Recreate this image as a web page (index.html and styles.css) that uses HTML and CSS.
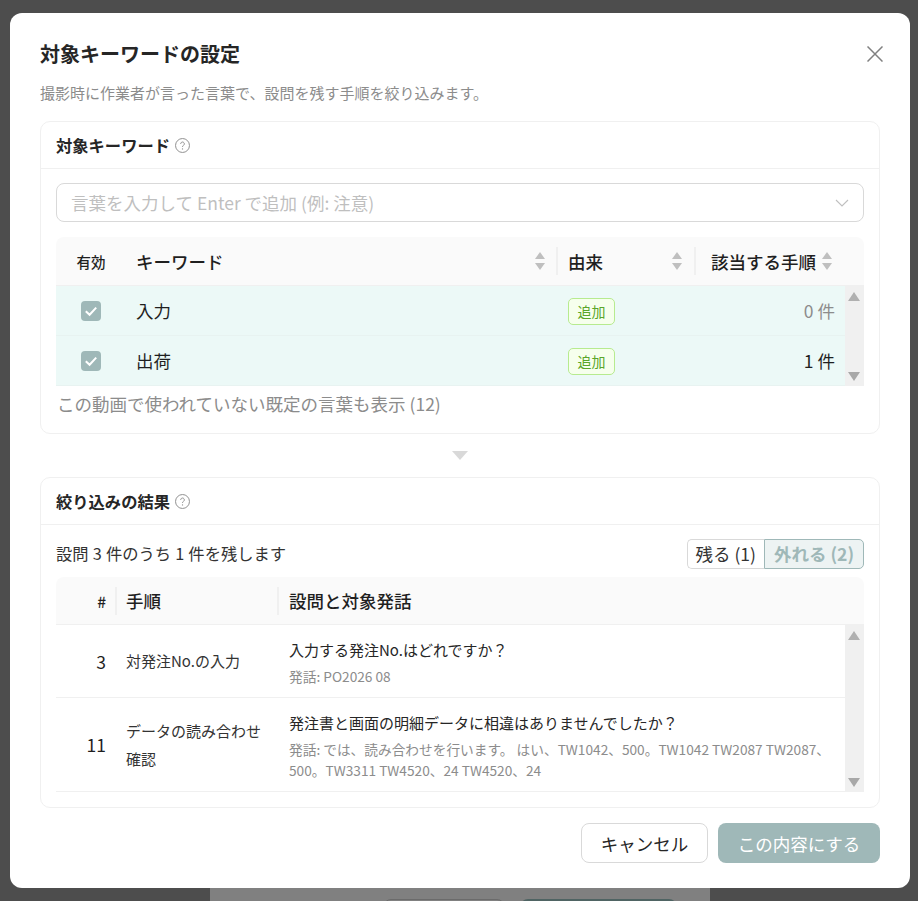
FILE: index.html
```html
<!DOCTYPE html>
<html lang="ja">
<head>
  <meta charset="utf-8">
  <title>対象キーワードの設定</title>
  <link rel="stylesheet" href="styles.css">
</head>
<body>

<div class="backdrop_page">
  <span class="page_btn page_btn_light"></span>
  <span class="page_btn page_btn_dark"></span>
</div>

<div class="modal">
  <div class="modal_head">
    <h1>対象キーワードの設定</h1>
    <svg class="close_icon" viewBox="0 0 16 16"><path d="M0.5 0.5L15.5 15.5M15.5 0.5L0.5 15.5"/></svg>
  </div>
  <p class="modal_desc">撮影時に作業者が言った言葉で、設問を残す手順を絞り込みます。</p>

  <section class="card card_keywords">
    <div class="card_head">
      対象キーワード
      <svg class="help_icon" viewBox="0 0 14 14"><circle cx="7" cy="7" r="6.5"/><path d="M5.3 5.5a1.7 1.7 0 1 1 2.6 1.4c-.6.4-.9.7-.9 1.4"/><circle class="help_dot" cx="7" cy="10.2" r=".6"/></svg>
    </div>
    <div class="card_body">
      <div class="select_box">
        <span>言葉を入力して Enter で追加 (例: 注意)</span>
        <svg class="chevron" viewBox="0 0 14 8"><path d="M1 1L7 7L13 1"/></svg>
      </div>

      <div class="table">
        <div class="kw_row kw_head">
          <div class="th_small">有効</div>
          <div class="th sortable">キーワード <i class="sort"></i></div>
          <div class="th sortable">由来 <i class="sort"></i></div>
          <div class="th sortable th_right">該当する手順 <i class="sort"></i></div>
          <div></div>
        </div>
        <div class="table_scroll">
          <div class="rows">
            <div class="kw_row kw_item">
              <div class="center"><span class="checkbox"><svg viewBox="0 0 20 20"><path d="M4.8 10.2L8.6 13.8L15.2 6.6"/></svg></span></div>
              <div class="kw_name">入力</div>
              <div><span class="tag">追加</span></div>
              <div class="count count_zero">0 件</div>
            </div>
            <div class="kw_row kw_item">
              <div class="center"><span class="checkbox"><svg viewBox="0 0 20 20"><path d="M4.8 10.2L8.6 13.8L15.2 6.6"/></svg></span></div>
              <div class="kw_name">出荷</div>
              <div><span class="tag">追加</span></div>
              <div class="count">1 件</div>
            </div>
          </div>
          <div class="scrollbar"><i class="arrow_up"></i><i class="arrow_down"></i></div>
        </div>
      </div>
      <div class="show_default">この動画で使われていない既定の言葉も表示 (12)</div>
    </div>
  </section>

  <div class="flow_arrow"><i></i></div>

  <section class="card card_result">
    <div class="card_head">
      絞り込みの結果
      <svg class="help_icon" viewBox="0 0 14 14"><circle cx="7" cy="7" r="6.5"/><path d="M5.3 5.5a1.7 1.7 0 1 1 2.6 1.4c-.6.4-.9.7-.9 1.4"/><circle class="help_dot" cx="7" cy="10.2" r=".6"/></svg>
    </div>
    <div class="card_body result_body">
      <div class="result_bar">
        <span class="result_text">設問 3 件のうち 1 件を残します</span>
        <div class="segment">
          <span class="seg_item">残る (1)</span>
          <span class="seg_item seg_active">外れる (2)</span>
        </div>
      </div>

      <div class="table">
        <div class="q_row q_head">
          <div class="th q_num_head">#</div>
          <div class="th">手順</div>
          <div class="th">設問と対象発話</div>
        </div>
        <div class="table_scroll">
          <div class="rows">
            <div class="q_row q_item q_item_first">
              <div class="q_num">3</div>
              <div class="q_step">対発注No.の入力</div>
              <div class="q_cell">
                <div class="q_text">入力する発注No.はどれですか？</div>
                <div class="q_speech">発話: PO2026 08</div>
              </div>
            </div>
            <div class="q_row q_item">
              <div class="q_num">11</div>
              <div class="q_step">データの読み合わせ<br>確認</div>
              <div class="q_cell">
                <div class="q_text">発注書と画面の明細データに相違はありませんでしたか？</div>
                <div class="q_speech">発話: では、読み合わせを行います。 はい、TW1042、500。TW1042 TW2087 TW2087、500。TW3311 TW4520、24 TW4520、24</div>
              </div>
            </div>
          </div>
          <div class="scrollbar"><i class="arrow_up"></i><i class="arrow_down"></i></div>
        </div>
      </div>
    </div>
  </section>

  <div class="modal_foot">
    <button class="btn">キャンセル</button>
    <button class="btn btn_primary">この内容にする</button>
  </div>
</div>

</body>
</html>
```

FILE: styles.css
```css
html, body {
  height: 100%;
}

body {
  margin: 0;
  height: 901px;
  overflow: hidden;
  position: relative;
  background-color: #4d4d4d;
  font-family: "Noto Sans CJK JP", "Noto Sans", sans-serif;
  color: #1f1f1f;
}

.backdrop_page {
  position: absolute;
  left: 210px;
  top: 888px;
  width: 500px;
  height: 13px;
  background-color: #808080;
}

.page_btn {
  position: absolute;
  top: 11px;
  height: 20px;
  border-radius: 8px;
}

.page_btn_light {
  left: 173px;
  width: 120px;
  background-color: #808080;
  border: 1px solid #6b6b6b;
}

.page_btn_dark {
  left: 310px;
  width: 157px;
  background-color: #4f6463;
}

.modal {
  position: absolute;
  left: 10px;
  top: 13px;
  width: 900px;
  height: 875px;
  box-sizing: border-box;
  padding: 24px 30px 0;
  background-color: #fff;
  border-radius: 12px;
}

.modal_head {
  display: flex;
  justify-content: space-between;
  align-items: center;
  height: 34px;
}

h1 {
  margin: 0;
  font-size: 20px;
  font-weight: 700;
  line-height: 34px;
  color: #262626;
}

.close_icon {
  width: 16px;
  height: 16px;
  margin-right: -3px;
}

.close_icon path {
  stroke: #808080;
  stroke-width: 1.5;
  fill: none;
}

.modal_desc {
  margin: 10px 0 16px;
  font-size: 15px;
  line-height: 24px;
  color: #8c8c8c;
}

.card {
  border: 1px solid #f0f0f0;
  border-radius: 10px;
}

.card_head {
  display: flex;
  align-items: center;
  gap: 5px;
  height: 46px;
  padding: 0 15px;
  font-size: 16.3px;
  font-weight: 700;
  color: #262626;
  border-bottom: 1px solid #f0f0f0;
}

.help_icon {
  width: 15px;
  height: 15px;
}

.help_icon circle, .help_icon path {
  stroke: #8c8c8c;
  stroke-width: 0.9;
  fill: none;
}

.help_icon .help_dot {
  fill: #8c8c8c;
  stroke: none;
}

.card_body {
  padding: 14px 15px 0;
}

.card_keywords {
  height: 313px;
  box-sizing: border-box;
}

.select_box {
  display: flex;
  align-items: center;
  justify-content: space-between;
  height: 39px;
  box-sizing: border-box;
  padding: 0 14px;
  border: 1px solid #d9d9d9;
  border-radius: 8px;
  font-size: 17.5px;
  color: #bfbfbf;
}

.chevron {
  width: 14px;
  height: 8px;
}

.chevron path {
  stroke: #bfbfbf;
  stroke-width: 1.1;
  fill: none;
}

.table {
  margin-top: 15px;
}

.kw_row {
  display: grid;
  grid-template-columns: 70px 431px 138px 150px 19px;
  align-items: center;
}

.kw_head {
  height: 48px;
  background-color: #fafafa;
  border-bottom: 1px solid #f0f0f0;
  border-radius: 8px 8px 0 0;
}

.th_small {
  text-align: center;
  font-size: 14.5px;
  font-weight: 500;
}

.th {
  font-size: 17.5px;
  font-weight: 500;
  color: #1f1f1f;
}

.sortable {
  position: relative;
  padding-left: 11px;
}

.kw_head .sortable + .sortable::before,
.q_head .th + .th::before {
  content: "";
  position: absolute;
  left: -1px;
  top: 50%;
  height: 28px;
  margin-top: -14px;
  width: 2px;
  background-color: #f0f0f0;
}

.q_head .th + .th::before {
  left: 0;
}

.kw_head .th_small + .sortable {
  padding-left: 10px;
}

.th_right {
  text-align: right;
  padding-right: 29px;
}

.sort {
  position: absolute;
  right: 11px;
  top: 50%;
  width: 11px;
  height: 18px;
  margin-top: -9px;
}

.kw_head .sortable + .sortable .sort {
  right: 12px;
}

.sort::before, .sort::after {
  content: "";
  position: absolute;
  left: 0;
  border-left: 5.5px solid transparent;
  border-right: 5.5px solid transparent;
}

.sort::before {
  top: 0;
  border-bottom: 7px solid #bfbfbf;
}

.sort::after {
  bottom: 0;
  border-top: 7px solid #bfbfbf;
}

.table_scroll {
  display: flex;
}

.rows {
  flex: 1;
  min-width: 0;
}

.scrollbar {
  position: relative;
  width: 19px;
  flex: none;
  background-color: #f0f0f0;
}

.arrow_up, .arrow_down {
  position: absolute;
  left: 3px;
  border-left: 6.5px solid transparent;
  border-right: 6.5px solid transparent;
}

.arrow_up {
  top: 6px;
  border-bottom: 9px solid #b0b0b0;
}

.arrow_down {
  bottom: 5px;
  border-top: 9px solid #a8a8a8;
}

.kw_item {
  grid-template-columns: 70px 431px 138px 150px;
  height: 50px;
  box-sizing: border-box;
  background-color: #ecf9f7;
  border-bottom: 1px solid #e8f3f1;
}

.center {
  display: flex;
  justify-content: center;
}

.checkbox {
  display: block;
  width: 20px;
  height: 20px;
  border-radius: 4px;
  background-color: #9fb8b8;
}

.checkbox svg {
  display: block;
}

.checkbox path {
  stroke: #fff;
  stroke-width: 2;
  fill: none;
}

.kw_name {
  padding-left: 10px;
  font-size: 17.5px;
}

.tag {
  display: block;
  width: 47px;
  height: 27px;
  box-sizing: border-box;
  margin: 1px 0 0 11px;
  border: 1px solid #b7eb8f;
  border-radius: 5px;
  background-color: #f6ffed;
  color: #5aa62a;
  font-size: 14px;
  line-height: 25px;
  text-align: center;
}

.count {
  font-size: 17.5px;
  text-align: right;
  padding-right: 10px;
}

.count_zero {
  color: #8c8c8c;
}

.show_default {
  margin: 6px 0 0 1px;
  font-size: 17.5px;
  line-height: 24px;
  color: #8c8c8c;
}

.flow_arrow {
  display: flex;
  justify-content: center;
  height: 43px;
  align-items: center;
}

.flow_arrow i {
  border-left: 8px solid transparent;
  border-right: 8px solid transparent;
  border-top: 9px solid #d9d9d9;
}

.card_result {
  height: 331px;
  box-sizing: border-box;
}

.result_body {
  padding-top: 14px;
}

.result_bar {
  display: flex;
  justify-content: space-between;
  align-items: center;
  height: 30px;
  font-size: 16.3px;
  color: #333;
}

.result_text {
  padding-bottom: 2px;
  word-spacing: 0.5px;
}

.segment {
  display: flex;
  height: 30px;
  font-size: 17.5px;
}

.seg_item {
  box-sizing: border-box;
  height: 30px;
  padding: 0 8px;
  line-height: 27px;
  border: 1px solid #d9d9d9;
  border-right: none;
  border-radius: 5px 0 0 5px;
}

.seg_active {
  padding: 0 9px;
  border: 1px solid #9fb8b8;
  border-radius: 0 5px 5px 0;
  background-color: #edf3f3;
  color: #9fb8b8;
  font-weight: 700;
}

.card_result .table {
  margin-top: 8px;
}

.q_row {
  display: grid;
  grid-template-columns: 59px 162px 1fr;
  align-items: center;
}

.q_head {
  height: 47px;
  background-color: #fafafa;
  border-bottom: 1px solid #f0f0f0;
  border-radius: 8px 8px 0 0;
}

.q_head .th {
  position: relative;
  padding-left: 11px;
}

.q_head .q_num_head {
  padding: 0 9px 0 0;
  text-align: right;
  font-size: 15.5px;
}

.q_item {
  border-bottom: 1px solid #f0f0f0;
  height: 73px;
  box-sizing: border-box;
}

.q_item + .q_item {
  height: 94px;
}

.q_num {
  font-size: 17.5px;
  text-align: right;
  padding-right: 9px;
}

.q_step {
  padding-left: 11px;
  font-size: 15px;
  line-height: 28px;
  color: #333;
}

.q_text {
  font-size: 15px;
  line-height: 24px;
  color: #262626;
}

.q_speech {
  margin-top: 4px;
  font-size: 13.7px;
  line-height: 21px;
  color: #8c8c8c;
}

.q_row > div:last-child {
  padding-left: 12px;
  padding-right: 10px;
}

.q_row > .q_cell {
  padding-top: 2px;
}

.modal_foot {
  display: flex;
  justify-content: flex-end;
  gap: 10px;
  margin-top: 15px;
}

.btn {
  height: 40px;
  width: 127px;
  box-sizing: border-box;
  border: 1px solid #d9d9d9;
  border-radius: 8px;
  background-color: #fff;
  font-family: inherit;
  font-size: 17.5px;
  color: #262626;
}

.btn_primary {
  width: 162px;
  border: none;
  background-color: #9fb8b8;
  color: #fff;
}
```
